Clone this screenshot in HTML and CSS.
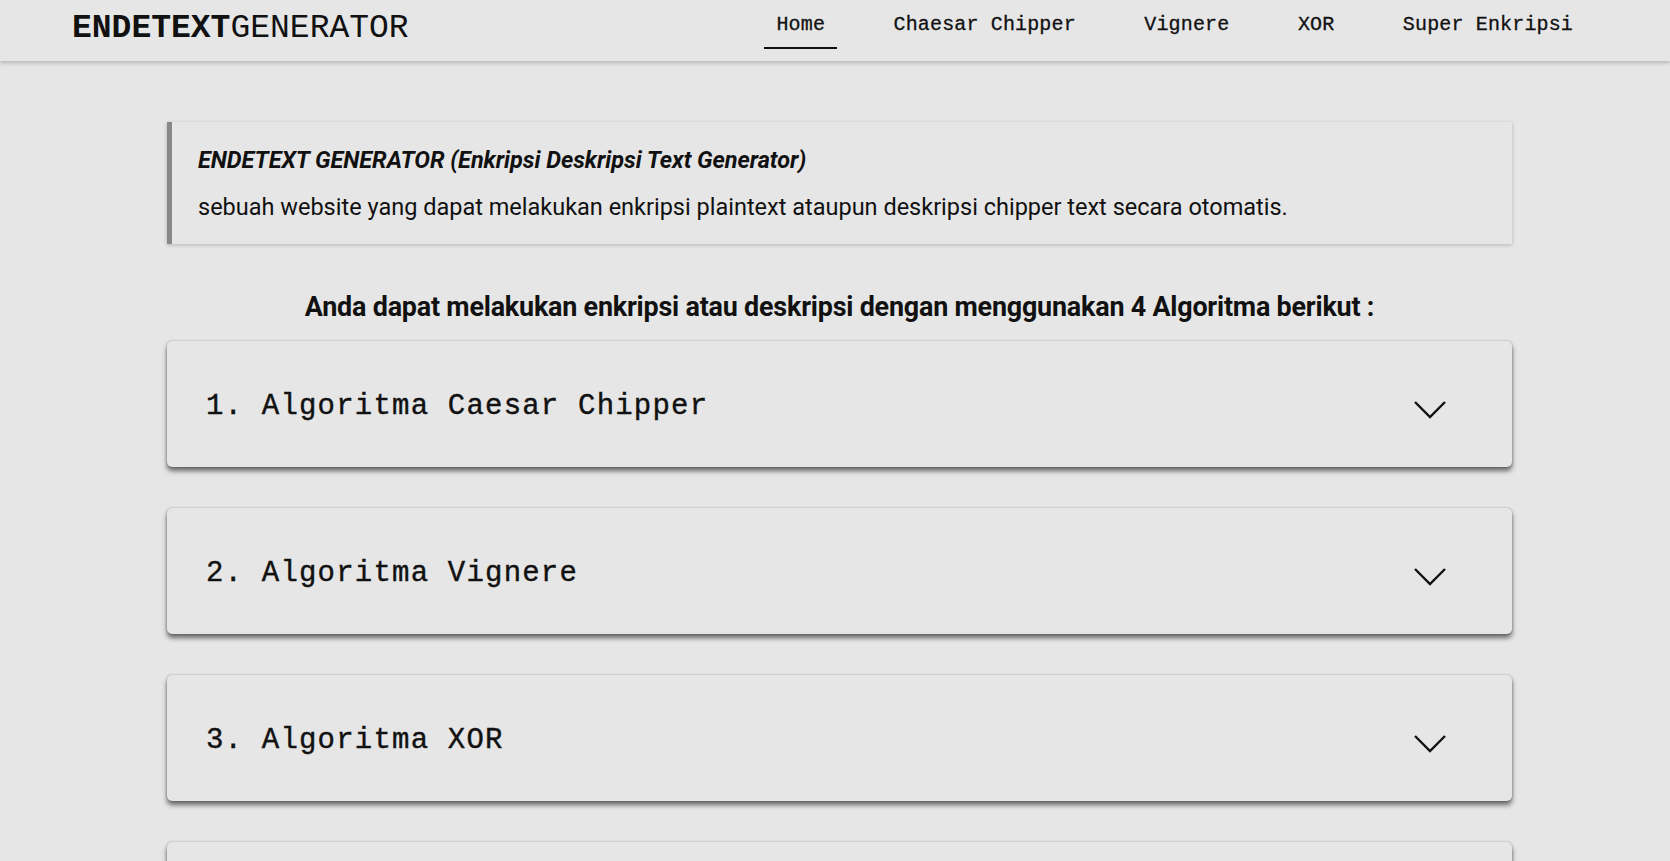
FILE: index.html
```html
<!DOCTYPE html>
<html>
<head>
<meta charset="utf-8">
<title>ENDETEXT GENERATOR</title>
<link rel="stylesheet" href="styles.css">
</head>
<body>
<header class="topbar">
  <div class="logo"><span class="logo-bold">ENDETEXT</span><span class="logo-light">GENERATOR</span></div>
  <nav class="nav">
    <a class="nav-link active" href="#">Home</a>
    <a class="nav-link" href="#">Chaesar Chipper</a>
    <a class="nav-link" href="#">Vignere</a>
    <a class="nav-link" href="#">XOR</a>
    <a class="nav-link" href="#">Super Enkripsi</a>
  </nav>
</header>
<main class="main">
  <section class="intro">
    <p class="intro-title">ENDETEXT GENERATOR (Enkripsi Deskripsi Text Generator)</p>
    <p class="intro-text">sebuah website yang dapat melakukan enkripsi plaintext ataupun deskripsi chipper text secara otomatis.</p>
  </section>
  <h2 class="lead">Anda dapat melakukan enkripsi atau deskripsi dengan menggunakan 4 Algoritma berikut :</h2>
  <div class="accordion">
    <div class="card"><span class="card-title">1. Algoritma Caesar Chipper</span><svg class="chev" width="32" height="18" viewBox="0 0 32 18"><path d="M1 1 L16 16 L31 1" fill="none" stroke="#111" stroke-width="2.4"/></svg></div>
    <div class="card"><span class="card-title">2. Algoritma Vignere</span><svg class="chev" width="32" height="18" viewBox="0 0 32 18"><path d="M1 1 L16 16 L31 1" fill="none" stroke="#111" stroke-width="2.4"/></svg></div>
    <div class="card"><span class="card-title">3. Algoritma XOR</span><svg class="chev" width="32" height="18" viewBox="0 0 32 18"><path d="M1 1 L16 16 L31 1" fill="none" stroke="#111" stroke-width="2.4"/></svg></div>
    <div class="card"><span class="card-title">4. Super Enkripsi</span><svg class="chev" width="32" height="18" viewBox="0 0 32 18"><path d="M1 1 L16 16 L31 1" fill="none" stroke="#111" stroke-width="2.4"/></svg></div>
  </div>
</main>
</body>
</html>
```

FILE: styles.css
```css
html, body {
  margin: 0;
  padding: 0;
  background: #e6e6e6;
  color: #111;
  font-family: Roboto, "Liberation Sans", sans-serif;
}

.topbar {
  height: 61px;
  box-sizing: border-box;
  display: flex;
  align-items: center;
  justify-content: space-between;
  padding: 0 85px 0 72px;
  background: #e6e6e6;
  box-shadow: 0 2px 4px rgba(0, 0, 0, 0.22);
  position: relative;
}

.logo {
  font-family: "Liberation Mono", "DejaVu Sans Mono", monospace;
  font-size: 33px;
  line-height: 1;
  margin-top: -5px;
}

.logo-bold {
  font-weight: 700;
}

.logo-light {
  font-weight: 400;
}

.nav {
  display: flex;
  gap: 44.5px;
  align-self: stretch;
}

.nav-link {
  display: flex;
  align-items: center;
  padding: 2px 12px 0;
  height: 49px;
  box-sizing: border-box;
  font-family: "Liberation Mono", "DejaVu Sans Mono", monospace;
  font-size: 20px;
  letter-spacing: 0.15px;
  color: #111;
  text-decoration: none;
  border-bottom: 2px solid transparent;
  -webkit-text-stroke: 0.3px #111;
}

.nav-link.active {
  border-bottom-color: #111;
}

.main {
  padding: 61px 158px 40px 167px;
}

.intro {
  border-left: 5px solid #888;
  padding: 24px 26px 0 26px;
  box-shadow: 0 1px 4px rgba(0, 0, 0, 0.22);
  height: 122px;
  box-sizing: border-box;
}

.intro-title {
  margin: 0;
  font-size: 23.5px;
  font-weight: 700;
  font-style: italic;
  line-height: 28px;
  letter-spacing: -0.05px;
}

.intro-text {
  margin: 19px 0 0;
  font-size: 23.5px;
  line-height: 28px;
}

.lead {
  margin: 48px 0 0;
  text-align: center;
  font-size: 26.9px;
  font-weight: 700;
  line-height: 30px;
  letter-spacing: -0.2px;
}

.accordion {
  display: flex;
  flex-direction: column;
  gap: 41px;
  margin-top: 19px;
}

.card {
  height: 126px;
  box-sizing: border-box;
  display: flex;
  align-items: center;
  justify-content: space-between;
  padding: 0 66px 0 39px;
  border-radius: 5px;
  box-shadow: 0 4px 5px rgba(0, 0, 0, 0.55), 0 0 2px rgba(0, 0, 0, 0.3);
}

.card-title {
  font-family: "Liberation Mono", "DejaVu Sans Mono", monospace;
  font-size: 29px;
  letter-spacing: 1.2px;
  margin-top: 4px;
  -webkit-text-stroke: 0.4px #111;
}

.chev {
  display: block;
  margin-top: 12px;
}
```
